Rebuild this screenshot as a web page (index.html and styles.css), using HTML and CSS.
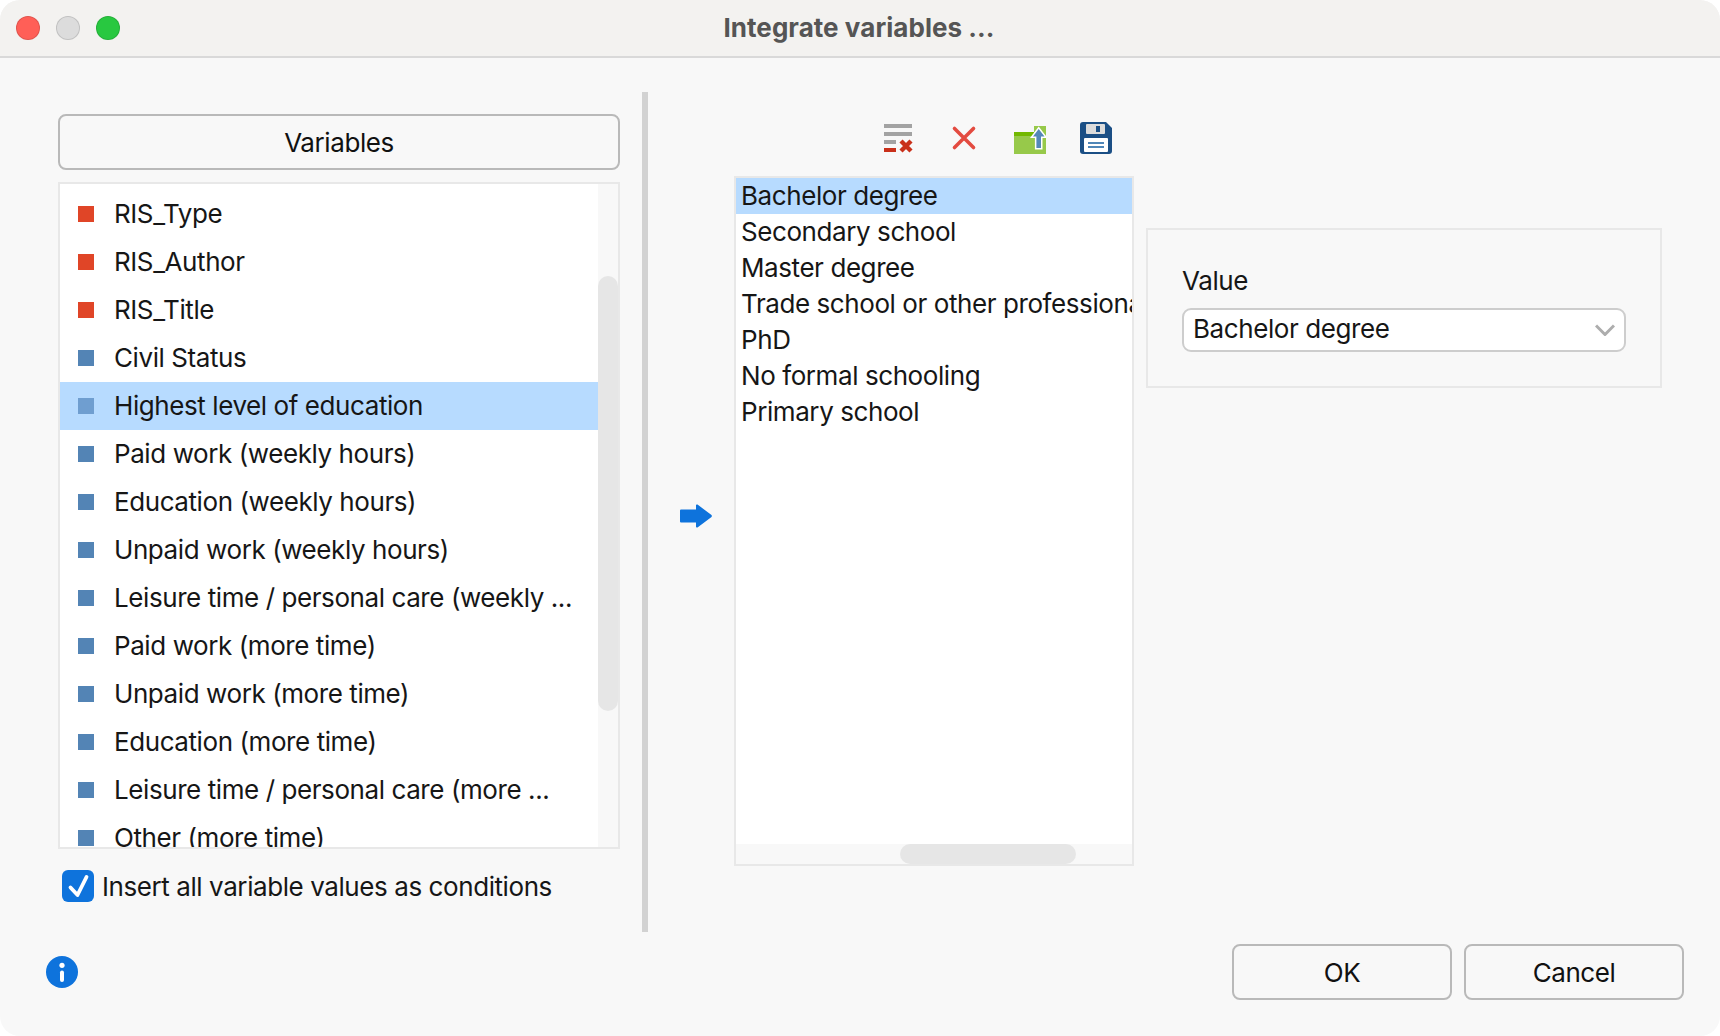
FILE: index.html
```html
<!DOCTYPE html>
<html lang="en">
<head>
<meta charset="utf-8">
<title>Integrate variables ...</title>
<link rel="stylesheet" href="styles.css">
</head>
<body>
<div class="window">
  <header class="titlebar">
    <div class="lights">
      <span class="light light-red"></span>
      <span class="light light-gray"></span>
      <span class="light light-green"></span>
    </div>
    <div class="title">Integrate variables ...</div>
  </header>
  <main class="main">
    <section class="left">
      <button class="btn btn-variables">Variables</button>
      <div class="varlist">
        <div class="varrows">
          <div class="varrow"><span class="sq sq-red"></span>RIS_Type</div>
          <div class="varrow"><span class="sq sq-red"></span>RIS_Author</div>
          <div class="varrow"><span class="sq sq-red"></span>RIS_Title</div>
          <div class="varrow"><span class="sq sq-blue"></span>Civil Status</div>
          <div class="varrow varrow-sel"><span class="sq sq-blue"></span>Highest level of education</div>
          <div class="varrow"><span class="sq sq-blue"></span>Paid work (weekly hours)</div>
          <div class="varrow"><span class="sq sq-blue"></span>Education (weekly hours)</div>
          <div class="varrow"><span class="sq sq-blue"></span>Unpaid work (weekly hours)</div>
          <div class="varrow"><span class="sq sq-blue"></span>Leisure time / personal care (weekly ...</div>
          <div class="varrow"><span class="sq sq-blue"></span>Paid work (more time)</div>
          <div class="varrow"><span class="sq sq-blue"></span>Unpaid work (more time)</div>
          <div class="varrow"><span class="sq sq-blue"></span>Education (more time)</div>
          <div class="varrow"><span class="sq sq-blue"></span>Leisure time / personal care (more ...</div>
          <div class="varrow"><span class="sq sq-blue"></span>Other (more time)</div>
        </div>
        <div class="vtrack"><div class="vthumb"></div></div>
      </div>
      <label class="check">
        <svg class="checkbox" viewBox="0 0 32 32" aria-hidden="true">
          <rect width="32" height="32" rx="6" fill="#0e73dc"/>
          <path d="M8.5 17.5 L15.5 25 L24.5 7" fill="none" stroke="#fff" stroke-width="3.8" stroke-linecap="round" stroke-linejoin="round"/>
        </svg>
        <span>Insert all variable values as conditions</span>
      </label>
    </section>
    <div class="splitter"></div>
    <div class="arrowcol">
      <svg class="arrow" viewBox="0 0 32 24" aria-hidden="true">
        <path d="M1 5.5 H16 V1.5 Q16 0 17.5 0.6 L31.5 11 Q32.2 12 31.5 13 L17.5 23.4 Q16 24 16 22.5 V18.5 H1 Q0 18.5 0 17.5 V6.5 Q0 5.5 1 5.5 Z" fill="#0e73dc"/>
      </svg>
    </div>
    <section class="center">
      <div class="toolbar">
        <svg class="tool" viewBox="0 0 32 32" aria-hidden="true">
          <rect x="2" y="2" width="28" height="4" fill="#a3a3a3"/>
          <rect x="2" y="10" width="28" height="4" fill="#a3a3a3"/>
          <rect x="2" y="18" width="12" height="4" fill="#a3a3a3"/>
          <rect x="2" y="26" width="12" height="4" fill="#c9301a"/>
          <path d="M19 19 L29 29 M29 19 L19 29" stroke="#c9301a" stroke-width="4.4" fill="none"/>
        </svg>
        <svg class="tool" viewBox="0 0 32 32" aria-hidden="true">
          <path d="M6.5 6.5 L25.5 25.5 M25.5 6.5 L6.5 25.5" stroke="#e34b40" stroke-width="3.6" stroke-linecap="round" fill="none"/>
        </svg>
        <svg class="tool" viewBox="0 0 32 32" aria-hidden="true">
          <rect x="0" y="14" width="32" height="18" fill="#97c94a"/>
          <rect x="0" y="10" width="20" height="4" fill="#72b800"/>
          <rect x="20" y="4" width="12" height="10" fill="#97c94a"/>
          <path class="tool-arrow" d="M24.7 7 L30.5 14.5 H27 V26 H22.4 V14.5 H19 Z"/>
        </svg>
        <svg class="tool" viewBox="0 0 32 32" aria-hidden="true">
          <path d="M3 0 H26 L32 6 V29 Q32 32 29 32 H3 Q0 32 0 29 V3 Q0 0 3 0 Z" fill="#1b4f85"/>
          <rect x="6" y="2" width="19" height="10" rx="1" fill="#dcdcdc"/>
          <rect x="16" y="4" width="4" height="6" fill="#1b4f85"/>
          <rect x="4" y="16" width="24" height="14" rx="1" fill="#fff"/>
          <rect x="8" y="20" width="16" height="2" fill="#4f86b8"/>
          <rect x="8" y="24" width="16" height="2" fill="#4f86b8"/>
        </svg>
      </div>
      <div class="vallist">
        <div class="valrows">
          <div class="valrow valrow-sel">Bachelor degree</div>
          <div class="valrow">Secondary school</div>
          <div class="valrow">Master degree</div>
          <div class="valrow">Trade school or other professional</div>
          <div class="valrow">PhD</div>
          <div class="valrow">No formal schooling</div>
          <div class="valrow">Primary school</div>
        </div>
        <div class="htrack"><div class="hthumb"></div></div>
      </div>
    </section>
    <section class="valuebox">
      <div class="valuelabel">Value</div>
      <div class="combo">
        <span class="combotext">Bachelor degree</span>
        <svg class="chevron" viewBox="0 0 20 12" aria-hidden="true">
          <path d="M1 1.5 L10 10.5 L19 1.5" fill="none" stroke="#adadad" stroke-width="3"/>
        </svg>
      </div>
    </section>
  </main>
  <footer class="footer">
    <svg class="info" viewBox="0 0 32 32" aria-hidden="true">
      <circle cx="16" cy="16" r="16" fill="#0e73dc"/>
      <circle cx="16" cy="9.3" r="2.6" fill="#fff"/>
      <rect x="14" y="14.5" width="4" height="11.5" rx="2" fill="#fff"/>
    </svg>
    <div class="actions">
      <button class="btn btn-action">OK</button>
      <button class="btn btn-action">Cancel</button>
    </div>
  </footer>
</div>
</body>
</html>
```

FILE: styles.css
```css
* { box-sizing: border-box; }

html, body {
  margin: 0;
  padding: 0;
  width: 1720px;
  height: 1036px;
  background: #ffffff;
  overflow: hidden;
}

body {
  font-family: Inter, "Liberation Sans", sans-serif;
  font-size: 26px;
  letter-spacing: -0.42px;
  color: #161616;
}

.window {
  width: 1720px;
  height: 1036px;
  background: #f8f8f8;
  border-radius: 20px;
  overflow: hidden;
  display: flex;
  flex-direction: column;
}

.titlebar {
  height: 58px;
  flex: none;
  background: #f3f2f0;
  border-bottom: 2px solid #d9d9d9;
  display: flex;
  align-items: center;
  padding-left: 16px;
}

.lights {
  display: flex;
  gap: 16px;
  width: 104px;
}

.light {
  width: 24px;
  height: 24px;
  border-radius: 50%;
  border: 1px solid rgba(0, 0, 0, 0.12);
}

.light-red { background: #ff5f57; }
.light-gray { background: #dcdcdc; }
.light-green { background: #28c840; }

.title {
  flex: 1;
  text-align: center;
  font-weight: 700;
  letter-spacing: 0.05px;
  color: #555555;
  padding-right: 122px;
  margin-top: -2px;
}

.main {
  flex: none;
  height: 840px;
  margin-top: 34px;
  padding-left: 58px;
  display: flex;
  align-items: flex-start;
}

.btn {
  font: inherit;
  letter-spacing: inherit;
  color: #111;
  background: #f8f8f8;
  border: 2px solid #b9b9b9;
  border-radius: 8px;
  padding: 0;
}

.left {
  width: 562px;
  flex: none;
  padding-top: 22px;
  display: flex;
  flex-direction: column;
}

.btn-variables {
  height: 56px;
  margin-bottom: 12px;
}

.varlist {
  height: 667px;
  border: 2px solid #e8e8e8;
  background: #fff;
  display: flex;
  overflow: hidden;
}

.varrows {
  flex: 1;
  min-width: 0;
  padding-top: 6px;
  overflow: hidden;
}

.varrow {
  height: 48px;
  display: flex;
  align-items: center;
  white-space: nowrap;
  padding: 0 0 2px 18px;
}

.varrow-sel { background: #b7dbff; }

.sq {
  width: 16px;
  height: 16px;
  flex: none;
  margin: 2px 20px 0 0;
}

.sq-red { background: #e04527; }
.sq-blue { background: #5384b5; }
.varrow-sel .sq { background: #6f9ed0; }

.vtrack {
  width: 20px;
  flex: none;
  background: #f8f8f8;
  padding-top: 92px;
}

.vthumb {
  height: 435px;
  border-radius: 10px;
  background: #e6e6e6;
}

.check {
  display: flex;
  align-items: center;
  gap: 8px;
  margin-top: 21px;
  padding-left: 4px;
  height: 32px;
}

.checkbox {
  width: 32px;
  height: 32px;
  flex: none;
}

.splitter {
  width: 6px;
  height: 840px;
  flex: none;
  margin-left: 22px;
  background: #d2d2d2;
}

.arrowcol {
  width: 32px;
  flex: none;
  margin-left: 32px;
  padding-top: 412px;
}

.arrow {
  display: block;
  width: 32px;
  height: 24px;
}

.center {
  width: 400px;
  flex: none;
  margin-left: 22px;
  padding-top: 30px;
}

.toolbar {
  display: flex;
  gap: 34px;
  padding-left: 148px;
  margin-bottom: 22px;
}

.tool {
  width: 32px;
  height: 32px;
  flex: none;
}

.tool-arrow {
  fill: #5488b8;
  stroke: #fff;
  stroke-width: 3px;
  paint-order: stroke;
}

.vallist {
  height: 690px;
  border: 2px solid #e8e8e8;
  background: #fff;
  display: flex;
  flex-direction: column;
}

.valrows {
  flex: 1;
  min-height: 0;
  overflow: hidden;
}

.valrow {
  height: 36px;
  line-height: 36px;
  padding-left: 5px;
  white-space: nowrap;
}

.valrow-sel { background: #b7dbff; }

.htrack {
  height: 20px;
  flex: none;
  background: #f8f8f8;
  padding-left: 164px;
}

.hthumb {
  width: 176px;
  height: 20px;
  border-radius: 10px;
  background: #e6e6e6;
}

.valuebox {
  width: 516px;
  height: 160px;
  flex: none;
  margin-left: 12px;
  margin-top: 136px;
  border: 2px solid #e8e8e8;
  padding: 35px 34px 0;
}

.valuelabel {
  line-height: 32px;
  margin-bottom: 11px;
}

.combo {
  height: 44px;
  background: #fff;
  border: 2px solid #cdcdcd;
  border-radius: 9px;
  display: flex;
  align-items: center;
  justify-content: space-between;
  padding: 0 9px 0 9px;
}

.combotext {
  margin-bottom: 4px;
}

.chevron {
  width: 20px;
  height: 12px;
  flex: none;
}

.footer {
  flex: 1;
  padding: 12px 36px 0 46px;
  display: flex;
  align-items: flex-start;
  justify-content: space-between;
}

.info {
  width: 32px;
  height: 32px;
  margin-top: 12px;
}

.actions {
  display: flex;
  gap: 12px;
}

.btn-action {
  width: 220px;
  height: 56px;
}
```
